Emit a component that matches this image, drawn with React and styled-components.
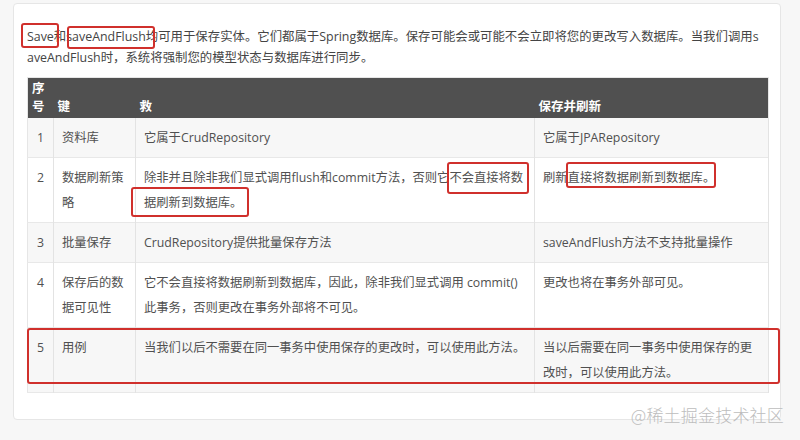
import React from "react";
import styled, { createGlobalStyle } from "styled-components";

const Global = createGlobalStyle`
  html, body { margin: 0; padding: 0; background: #f7f7f7; }
  * { box-sizing: border-box; }
`;

const FONT = `"Open Sans", "Noto Sans CJK SC", sans-serif`;
const RED = "#d0302c";

const Page = styled.div`
  position: relative;
  width: 800px;
  height: 440px;
  padding: 3px 19px 0 13px;
  font-family: ${FONT};
  overflow: hidden;
`;

const Card = styled.div`
  background: #fff;
  border: 1px solid #e6e6e6;
  border-radius: 4px;
  height: 417px;
  padding: 22px 13px 0 13px;
`;

const Para = styled.p`
  margin: 0 0 9px;
  font-size: 12.4px;
  line-height: 21px;
  color: #444;
  white-space: nowrap;
`;

const Mark = styled.span`
  position: relative;
  &::after {
    content: "";
    position: absolute;
    top: ${(p) => -p.$t}px;
    right: ${(p) => -p.$r}px;
    bottom: ${(p) => -p.$b}px;
    left: ${(p) => -p.$l}px;
    border: 2px solid ${RED};
    border-radius: 3px;
    pointer-events: none;
  }
`;

const TableWrap = styled.div`
  position: relative;
  width: 741px;
`;

const Table = styled.table`
  width: 741px;
  table-layout: fixed;
  border-collapse: collapse;
  border: 1px solid #e6e6e6;
  font-size: 12.3px;
`;

const Th = styled.th`
  background: #505050;
  color: #fff;
  font-weight: 700;
  font-size: 12.5px;
  text-align: left;
  vertical-align: bottom;
  line-height: 18px;
  padding: 2px 4px;
  height: 40px;
`;

const Row = styled.tr`
  background: ${(p) => (p.$shade ? "#f7f7f7" : "#ffffff")};
  border-bottom: 1px solid #e8e8e8;
`;

const Td = styled.td`
  vertical-align: top;
  padding: 7px 8px 7px ${(p) => (p.$first ? 9 : 8)}px;
  line-height: 25px;
  color: #505050;
  white-space: nowrap;
  border-right: 1px solid #e3e3e3;
`;

const RowFrame = styled.div`
  position: absolute;
  left: 0;
  right: -12px;
  bottom: 9px;
  height: 56px;
  border: 2.5px solid ${RED};
  border-radius: 3px;
  pointer-events: none;
`;

const Watermark = styled.div`
  position: absolute;
  right: 16px;
  top: 403px;
  font-family: "Noto Sans CJK SC", sans-serif;
  font-size: 17px;
  line-height: 24px;
  color: #bdbdbd;
  font-weight: 300;
  letter-spacing: 0.2px;
`;

const rows = [
  {
    n: "1",
    k: "资料库",
    a: "它属于CrudRepository",
    b: "它属于JPARepository",
  },
  {
    n: "2",
    k: (
      <>
        数据刷新策
        <br />略
      </>
    ),
    a: (
      <>
        除非并且除非我们显式调用flush和commit方法，否则它
        <Mark $t={7} $r={6} $b={8} $l={2}>
          不会直接将数
        </Mark>
        <br />
        <Mark $t={7} $r={7} $b={6} $l={13}>
          据刷新到数据库。
        </Mark>
      </>
    ),
    b: (
      <>
        刷新
        <Mark $t={7} $r={1} $b={2} $l={2}>
          直接将数据刷新到数据库。
        </Mark>
      </>
    ),
  },
  {
    n: "3",
    k: "批量保存",
    a: "CrudRepository提供批量保存方法",
    b: "saveAndFlush方法不支持批量操作",
  },
  {
    n: "4",
    k: (
      <>
        保存后的数
        <br />
        据可见性
      </>
    ),
    a: (
      <>
        它不会直接将数据刷新到数据库，因此，除非我们显式调用 commit()
        <br />
        此事务，否则更改在事务外部将不可见。
      </>
    ),
    b: "更改也将在事务外部可见。",
  },
  {
    n: "5",
    k: "用例",
    a: "当我们以后不需要在同一事务中使用保存的更改时，可以使用此方法。",
    b: (
      <>
        当以后需要在同一事务中使用保存的更
        <br />
        改时，可以使用此方法。
      </>
    ),
  },
];

export default function App() {
  return (
    <>
      <Global />
      <Page>
        <Card>
          <Para>
            <Mark $t={5} $r={5} $b={3} $l={6}>
              Save
            </Mark>
            和
            <Mark $t={2} $r={9} $b={4} $l={-1}>
              saveAndFlush
            </Mark>
            均可用于保存实体。它们都属于Spring数据库。保存可能会或可能不会立即将您的更改写入数据库。当我们调用s
            <br />
            aveAndFlush时，系统将强制您的模型状态与数据库进行同步。
          </Para>
          <TableWrap>
            <Table>
              <colgroup>
                <col style={{ width: 26 }} />
                <col style={{ width: 82 }} />
                <col style={{ width: 399 }} />
                <col style={{ width: 234 }} />
              </colgroup>
              <thead>
                <tr>
                  <Th>序号</Th>
                  <Th>键</Th>
                  <Th>救</Th>
                  <Th>保存并刷新</Th>
                </tr>
              </thead>
              <tbody>
                {rows.map((r, i) => (
                  <Row key={r.n} $shade={i % 2 === 0}>
                    <Td $first>{r.n}</Td>
                    <Td>{r.k}</Td>
                    <Td>{r.a}</Td>
                    <Td>{r.b}</Td>
                  </Row>
                ))}
              </tbody>
            </Table>
            <RowFrame />
          </TableWrap>
        </Card>
        <Watermark>@稀土掘金技术社区</Watermark>
      </Page>
    </>
  );
}
